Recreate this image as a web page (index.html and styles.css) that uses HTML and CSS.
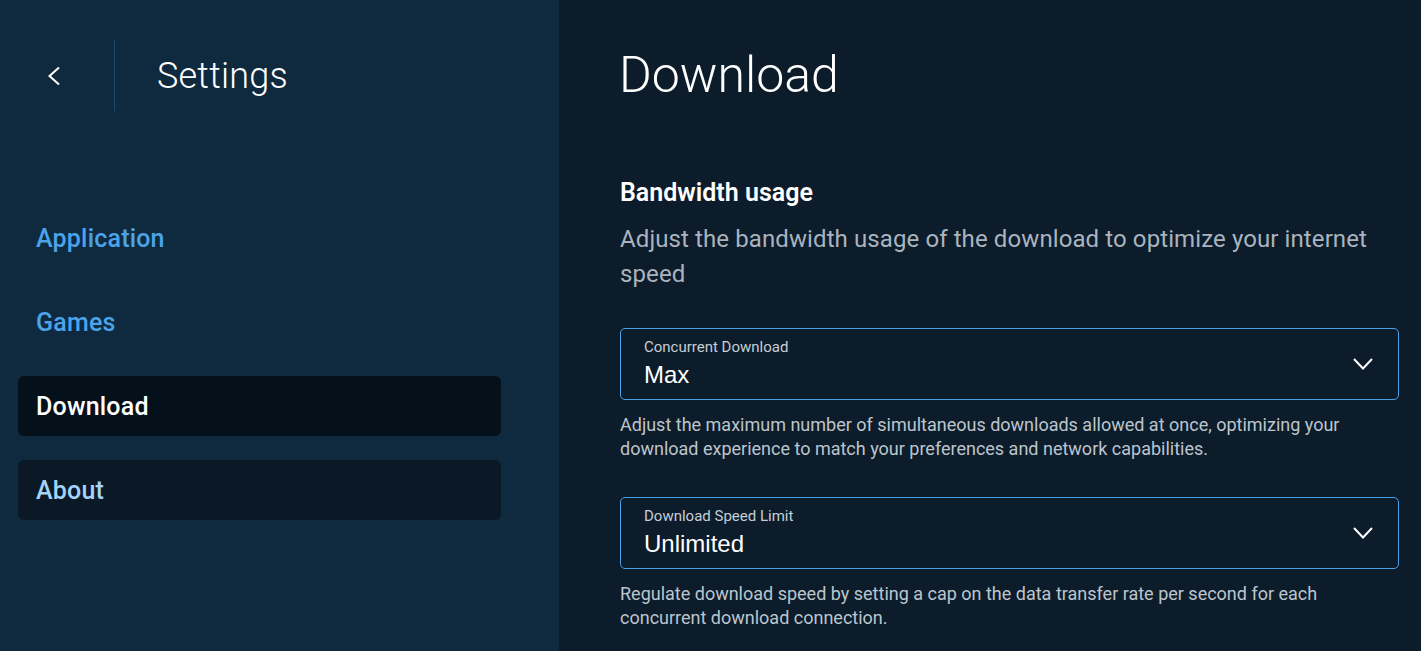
FILE: index.html
```html
<!DOCTYPE html>
<html lang="en">
<head>
<meta charset="utf-8">
<title>Settings - Download</title>
<link rel="stylesheet" href="styles.css">
</head>
<body>
<div class="app">
  <aside class="sidebar">
    <div class="side-head">
      <button class="back" aria-label="Back">
        <svg width="14" height="20" viewBox="0 0 14 20"><path d="M12 1.5 L2.5 10 L12 18.5" fill="none" stroke="#ffffff" stroke-width="2"/></svg>
      </button>
      <h1 class="side-title">Settings</h1>
    </div>
    <nav class="nav">
      <a class="nav-item link">Application</a>
      <a class="nav-item link">Games</a>
      <a class="nav-item active">Download</a>
      <a class="nav-item boxed">About</a>
    </nav>
  </aside>
  <main class="main">
    <h2 class="page-title">Download</h2>
    <section class="section">
      <h3 class="section-title">Bandwidth usage</h3>
      <p class="section-desc">Adjust the bandwidth usage of the download to optimize your internet speed</p>
      <div class="field">
        <div class="select">
          <div class="select-text">
            <span class="select-label">Concurrent Download</span>
            <span class="select-value">Max</span>
          </div>
          <svg class="chev" width="20" height="12" viewBox="0 0 20 12"><path d="M1 1 L10 10.5 L19 1" fill="none" stroke="#ffffff" stroke-width="2"/></svg>
        </div>
        <p class="help">Adjust the maximum number of simultaneous downloads allowed at once, optimizing your download experience to match your preferences and network capabilities.</p>
      </div>
      <div class="field">
        <div class="select">
          <div class="select-text">
            <span class="select-label">Download Speed Limit</span>
            <span class="select-value">Unlimited</span>
          </div>
          <svg class="chev" width="20" height="12" viewBox="0 0 20 12"><path d="M1 1 L10 10.5 L19 1" fill="none" stroke="#ffffff" stroke-width="2"/></svg>
        </div>
        <p class="help">Regulate download speed by setting a cap on the data transfer rate per second for each concurrent download connection.</p>
      </div>
    </section>
  </main>
</div>
</body>
</html>
```

FILE: styles.css
```css
* { box-sizing: border-box; }
html, body { margin: 0; padding: 0; height: 100%; }
body {
  font-family: Roboto, "Liberation Sans", sans-serif;
  background: #0c1c2a;
  color: #ffffff;
  overflow: hidden;
}
.app { display: flex; height: 100vh; }

.sidebar {
  width: 559px;
  flex: 0 0 559px;
  background: #0f2a3f;
}
.side-head {
  display: flex;
  align-items: center;
  margin-top: 40px;
  height: 71px;
}
.back {
  width: 115px;
  height: 100%;
  border: 0;
  border-right: 1px solid #1b4a6b;
  background: transparent;
  display: flex;
  align-items: center;
  padding: 0 0 0 47px;
  cursor: pointer;
}
.side-title {
  margin: 0 0 0 42px;
  font-weight: 300;
  font-size: 36px;
  letter-spacing: 0.2px;
  color: #ffffff;
}

.nav {
  display: flex;
  flex-direction: column;
  gap: 24px;
  padding: 97px 58px 0 18px;
}
.nav-item {
  display: flex;
  align-items: center;
  height: 60px;
  padding-left: 18px;
  border-radius: 6px;
  font-size: 25px;
  font-weight: 500;
  letter-spacing: 0.2px;
  text-decoration: none;
}
.nav-item.link { color: #4ba3ea; }
.nav-item.active { background: #05111a; color: #ffffff; }
.nav-item.boxed { background: #0a1925; color: #a5d3f8; }

.main {
  flex: 1;
  padding: 0 22px 0 61px;
}
.page-title {
  margin: 43px 0 0 -1px;
  font-size: 50px;
  font-weight: 300;
  line-height: 64px;
  color: #ffffff;
}
.section { margin-top: 71px; }
.section-title {
  margin: 0;
  font-size: 25px;
  font-weight: 600;
  line-height: 30px;
  color: #ffffff;
}
.section-desc {
  margin: 14px 0 0;
  font-size: 24px;
  line-height: 35px;
  letter-spacing: 0.1px;
  color: #a9b4bf;
}
.field { margin-top: 36px; }
.select {
  height: 72px;
  border: 1px solid #4a9fe6;
  border-radius: 5px;
  display: flex;
  align-items: center;
  justify-content: space-between;
  padding: 0 25px 0 23px;
}
.select-text { display: flex; flex-direction: column; gap: 4px; }
.select-label {
  font-size: 15px;
  line-height: 18px;
  color: #c6ced6;
}
.select-value {
  font-family: "Liberation Sans", Arial, sans-serif;
  font-size: 24px;
  line-height: 30px;
  color: #ffffff;
}
.help {
  margin: 13px 0 0;
  font-size: 18px;
  line-height: 24px;
  color: #bcc5cd;
}
```
